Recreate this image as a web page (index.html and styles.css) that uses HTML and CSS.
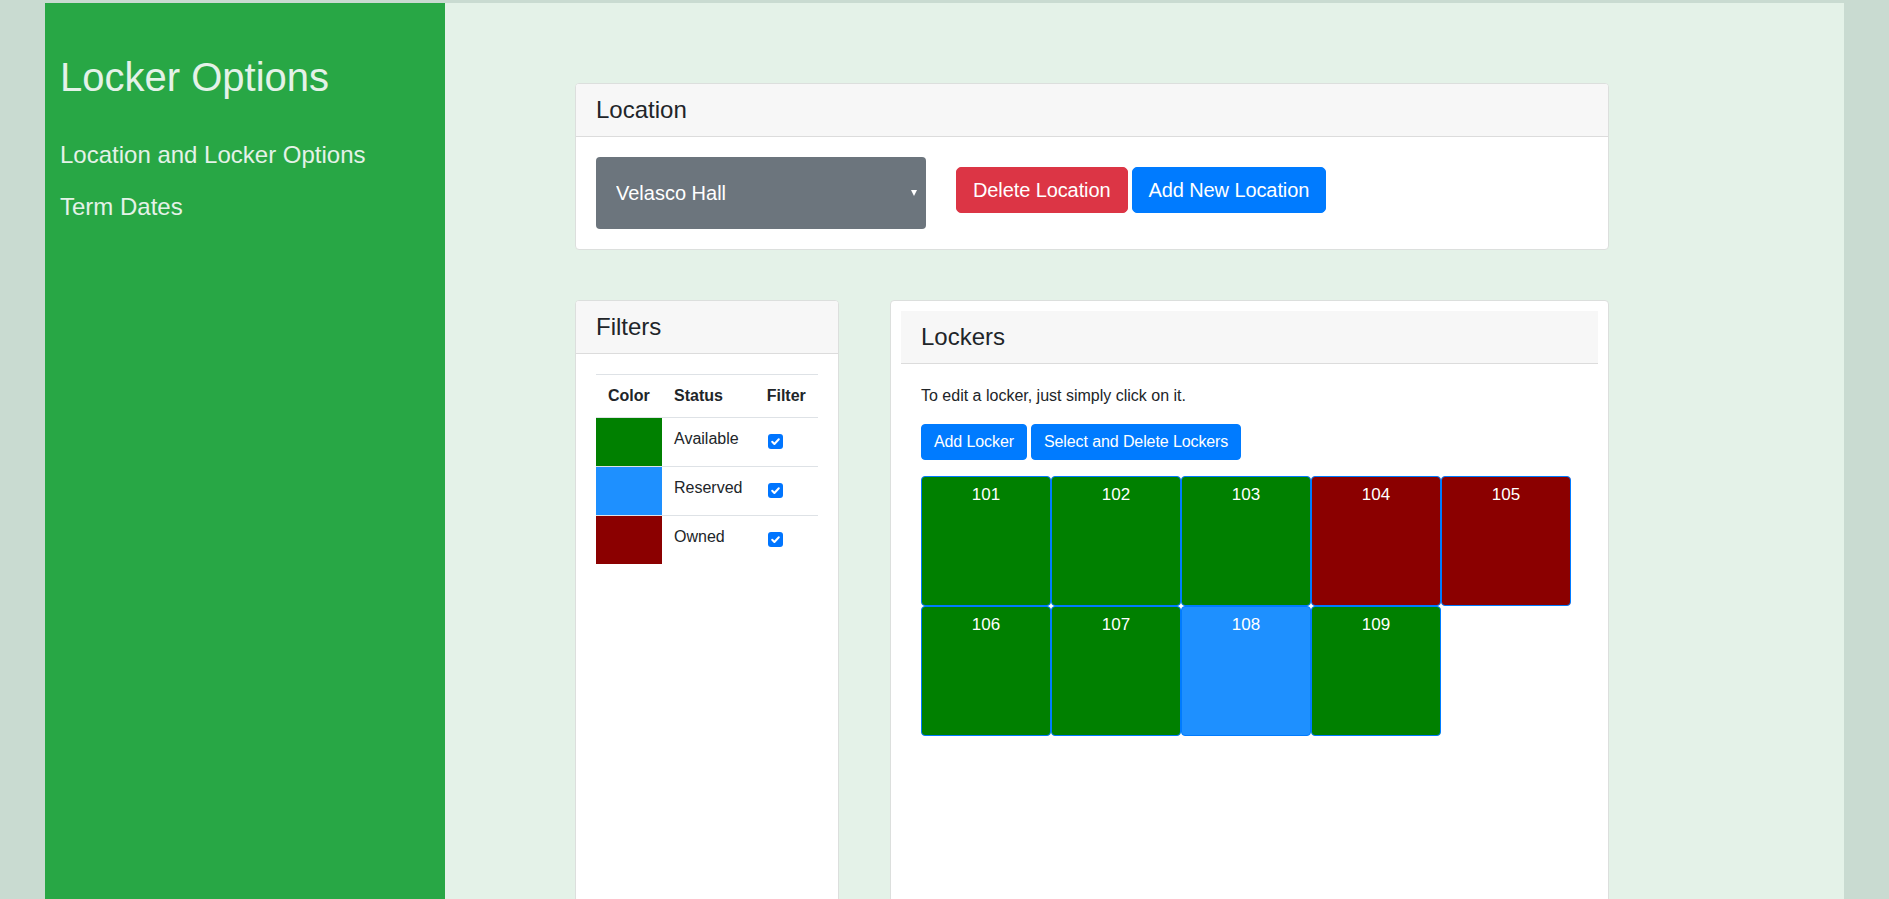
FILE: index.html
```html
<!DOCTYPE html>
<html lang="en">
<head>
<meta charset="utf-8">
<title>Locker Options</title>
<link rel="stylesheet" href="styles.css">
</head>
<body>
<div class="app">
  <aside class="sidebar">
    <h1 class="side-title">Locker Options</h1>
    <nav class="side-nav">
      <a class="side-link" href="#">Location and Locker Options</a>
      <a class="side-link" href="#">Term Dates</a>
    </nav>
  </aside>
  <main class="main">
    <section class="card card-location">
      <div class="card-header">Location</div>
      <div class="card-body location-body">
        <div class="select-wrap">
          <select class="loc-select"><option>Velasco Hall</option></select>
        </div>
        <div class="loc-actions">
          <button class="btn btn-lg btn-danger" type="button">Delete Location</button>
          <button class="btn btn-lg btn-primary" type="button">Add New Location</button>
        </div>
      </div>
    </section>
    <div class="lower">
      <section class="card card-filters">
        <div class="card-header">Filters</div>
        <div class="card-body">
          <table class="filter-table">
            <thead>
              <tr><th>Color</th><th>Status</th><th>Filter</th></tr>
            </thead>
            <tbody>
              <tr>
                <td class="swatch sw-available"></td>
                <td class="status">Available</td>
                <td class="filter"><span class="chk"><svg viewBox="0 0 15 15" width="15" height="15"><path d="M4.2 7.8 L6.4 10 L10.8 5.2" fill="none" stroke="#fff" stroke-width="2" stroke-linecap="round" stroke-linejoin="round"/></svg></span></td>
              </tr>
              <tr>
                <td class="swatch sw-reserved"></td>
                <td class="status">Reserved</td>
                <td class="filter"><span class="chk"><svg viewBox="0 0 15 15" width="15" height="15"><path d="M4.2 7.8 L6.4 10 L10.8 5.2" fill="none" stroke="#fff" stroke-width="2" stroke-linecap="round" stroke-linejoin="round"/></svg></span></td>
              </tr>
              <tr class="last">
                <td class="swatch sw-owned"></td>
                <td class="status">Owned</td>
                <td class="filter"><span class="chk"><svg viewBox="0 0 15 15" width="15" height="15"><path d="M4.2 7.8 L6.4 10 L10.8 5.2" fill="none" stroke="#fff" stroke-width="2" stroke-linecap="round" stroke-linejoin="round"/></svg></span></td>
              </tr>
            </tbody>
          </table>
        </div>
      </section>
      <section class="card card-lockers">
        <div class="card-header">Lockers</div>
        <div class="card-body lockers-body">
          <p class="hint">To edit a locker, just simply click on it.</p>
          <div class="locker-actions">
            <button class="btn btn-primary" type="button">Add Locker</button>
            <button class="btn btn-primary" type="button">Select and Delete Lockers</button>
          </div>
          <div class="lockers">
            <div class="locker st-available">101</div>
            <div class="locker st-available">102</div>
            <div class="locker st-available">103</div>
            <div class="locker st-owned">104</div>
            <div class="locker st-owned">105</div>
            <div class="locker st-available">106</div>
            <div class="locker st-available">107</div>
            <div class="locker st-reserved">108</div>
            <div class="locker st-available">109</div>
          </div>
        </div>
      </section>
    </div>
  </main>
</div>
</body>
</html>
```

FILE: styles.css
```css
html, body {
  margin: 0;
  padding: 0;
  height: 100%;
  overflow: hidden;
}

body {
  background: #c9dbd1;
  font-family: "Liberation Sans", Arial, Helvetica, sans-serif;
  font-size: 16px;
  line-height: 1.5;
  color: #212529;
}

.app {
  display: flex;
  margin: 3px 45px 0;
  height: calc(100vh - 3px);
}

/* Sidebar */
.sidebar {
  flex: 0 0 400px;
  background: #28a745;
  padding: 50px 15px 0;
  box-sizing: border-box;
}

.side-title {
  margin: 0 0 28px;
  font-size: 40px;
  line-height: 48px;
  font-weight: 400;
  color: #e4f2e8;
}

.side-nav {
  display: flex;
  flex-direction: column;
}

.side-link {
  display: block;
  font-size: 24px;
  line-height: 36px;
  padding: 8px 0;
  color: #e4f2e8;
  text-decoration: none;
}

/* Main */
.main {
  flex: 1 1 auto;
  background: #e4f2e8;
  padding: 80px 0 0 130px;
  box-sizing: border-box;
  display: flex;
  flex-direction: column;
}

.card {
  background: #fff;
  border: 1px solid #dcdfdd;
  border-radius: 4px;
  box-sizing: border-box;
}

.card-header {
  background: #f7f7f7;
  border-bottom: 1px solid #dcdcdc;
  padding: 12px 20px;
  font-size: 24px;
  line-height: 28px;
  border-radius: 3px 3px 0 0;
}

.card-body {
  padding: 20px;
}

.card-location {
  width: 1034px;
}

.location-body {
  display: flex;
  align-items: flex-start;
  gap: 30px;
}

.select-wrap {
  position: relative;
  width: 330px;
  height: 72px;
}

.select-wrap::after {
  content: "";
  position: absolute;
  right: 9px;
  top: 33px;
  border-left: 3.5px solid transparent;
  border-right: 3.5px solid transparent;
  border-top: 6px solid #fff;
  pointer-events: none;
}

.loc-select {
  -webkit-appearance: none;
  appearance: none;
  width: 330px;
  height: 72px;
  background: #6c757d;
  color: #fff;
  border: none;
  border-radius: 4px;
  font-family: "Liberation Sans", Arial, sans-serif;
  font-size: 20px;
  padding: 0 20px;
  outline: none;
}

.loc-actions {
  display: flex;
  gap: 4px;
  margin-top: 10px;
}

.btn {
  font-family: "Liberation Sans", Arial, sans-serif;
  font-size: 16px;
  line-height: 24px;
  padding: 5px 12px;
  border: 1px solid transparent;
  border-radius: 4px;
  color: #fff;
  letter-spacing: -0.1px;
  cursor: pointer;
}

.btn-lg {
  font-size: 20px;
  line-height: 30px;
  padding: 7px 16px;
  border-radius: 5px;
}

.btn-danger {
  background: #dc3545;
  border-color: #dc3545;
}

.btn-primary {
  background: #007bff;
  border-color: #007bff;
}

/* Lower row */
.lower {
  display: flex;
  gap: 51px;
  margin-top: 50px;
  width: 1034px;
}

.card-filters {
  flex: 0 0 264px;
  min-height: 700px;
}

.card-lockers {
  flex: 0 0 719px;
  min-height: 700px;
  padding: 10px;
}

.card-lockers .card-header {
  border-radius: 0;
}

/* Filter table */
.filter-table {
  width: 100%;
  border-collapse: separate;
  border-spacing: 0;
}

.filter-table th {
  font-weight: 700;
  text-align: left;
  padding: 9px 12px;
  border-top: 1px solid #dee2e6;
  border-bottom: 1px solid #dee2e6;
  line-height: 24px;
}

.filter-table td {
  border-bottom: 1px solid #dee2e6;
  vertical-align: top;
  padding: 9px 12px 0;
  line-height: 24px;
}

.filter-table tr.last td {
  border-bottom: none;
}

.filter-table td.swatch {
  padding: 0;
  width: 66px;
  height: 48px;
}

.sw-available { background: #008000; }
.sw-reserved { background: #1e90ff; }
.sw-owned { background: #8b0000; }

.chk {
  display: block;
  width: 15px;
  height: 15px;
  margin-top: 7px;
  margin-left: 1px;
  background: #0075ff;
  border-radius: 3px;
}

.chk svg {
  display: block;
}

/* Lockers */
.hint {
  margin: 0 0 16px;
}

.locker-actions {
  display: flex;
  gap: 4px;
  margin-bottom: 16px;
}

.lockers {
  display: flex;
  flex-wrap: wrap;
  width: 657px;
}

.locker {
  width: 130px;
  height: 130px;
  box-sizing: border-box;
  border: 1px solid #007bff;
  border-radius: 4px;
  color: #fff;
  text-align: center;
  font-size: 17px;
  line-height: 27px;
  padding-top: 4px;
}

.st-available { background: #008000; }
.st-reserved { background: #1e90ff; }
.st-owned { background: #8b0000; }
```
